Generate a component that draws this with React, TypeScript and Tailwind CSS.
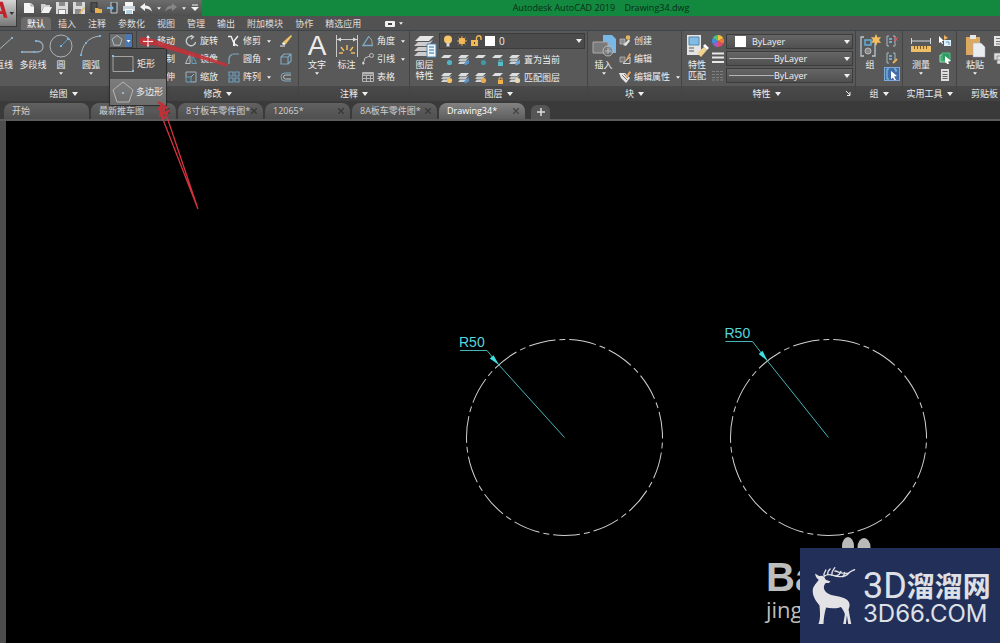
import type { ReactNode } from 'react'

const glyphs: Record<string, ReactNode> = {
  move: (
    <g stroke="#f4f4f4" fill="#f4f4f4">
      <path d="M2 6h8M6 2v8" />
      <path stroke="none" d="M6 0l2 3H4zM6 12l2-3H4zM0 6l3-2v4zM12 6L9 4v4z" />
    </g>
  ),
  rotate: (
    <g fill="none" stroke="#c4ccd0" strokeWidth="1.3">
      <path d="M7.5 1.6A4.7 4.7 0 1 0 10.6 7" />
      <path d="M5.5 0l3 1.8-2.6 2.4" />
    </g>
  ),
  trim: (
    <g fill="none" stroke="#f0f0f0" strokeWidth="1.4">
      <path d="M0 1.500h3M3 1l4 10M10 1L6 6" />
      <path d="M6 6v5" strokeWidth="2" />
      <path d="M7 9l3 2" />
    </g>
  ),
  erase: (
    <g>
      <path d="M11 0l1 1-6 8-3-2z" fill="#f2c667" />
      <path d="M3 7l3 2-2 1-2-1z" fill="#fff" />
      <path d="M0 11h5" stroke="#f2f2f2" />
    </g>
  ),
  copy: (
    <g fill="none" stroke="#c8c8c8">
      <circle cx="4" cy="5" r="3" />
      <circle cx="8" cy="7" r="3" stroke="#7fb2d0" />
    </g>
  ),
  mirror: (
    <g fill="none">
      <path d="M5 1v9.500H.5z" stroke="#b9c2c8" />
      <path d="M7 1v9.500h4.500z" stroke="#6d9db9" />
    </g>
  ),
  fillet: <path d="M1 11V6a5 5 0 0 1 5-5h5" fill="none" stroke="#7fa9c2" strokeWidth="1.2" />,
  solid: (
    <g fill="none" stroke="#7ea6bd" strokeWidth="1.2">
      <path d="M1 4h7v7H1zM1 4l3-3h7v7l-3 3M8 4l3-3" />
    </g>
  ),
  stretch: <path d="M1 2h6v8H1zM7 6h4M9 4l2 2-2 2" fill="none" stroke="#a9bcc7" />,
  scale: (
    <g fill="none">
      <path d="M1 6V1h10v10H6" stroke="#9fb4c0" />
      <path d="M1 6h5v5H1z" stroke="#6fa0bd" />
      <path d="M6 6l3-3" stroke="#9fb4c0" />
    </g>
  ),
  array: (
    <g fill="none" stroke="#6f9fbe" strokeWidth="1.2">
      <path d="M1 1h4v4H1zM7 1h4v4H7zM1 7h4v4H1zM7 7h4v4H7z" />
    </g>
  ),
  offset: (
    <g fill="none" stroke="#7ea6bd">
      <path d="M11 2H5a4 4 0 0 0 0 8h6" />
      <path d="M11 4H5.500a2 2 0 0 0 0 4H11" stroke="#b9c6cd" />
    </g>
  ),
  angle: (
    <g fill="none">
      <path d="M7 1L1 10.500h10" stroke="#7fa9c2" strokeWidth="1.3" />
      <path d="M7 2c3 2 3.500 5 3 8" stroke="#aaa" />
    </g>
  ),
  leader: (
    <g fill="none" stroke="#bdbdbd">
      <path d="M1 11l2-6 5-2" />
      <circle cx="9.500" cy="2.500" r="2" />
      <path d="M0 9l1 3 2-2z" fill="#ddd" stroke="none" />
    </g>
  ),
  table: (
    <g fill="none" stroke="#b4b4b4">
      <path d="M.5 1.500h11v9H.5zM.5 4.500h11M.5 7.500h11M4.500 4v6M8.500 4v6" />
      <path d="M1 2.500h10" strokeWidth="2" />
    </g>
  ),
  create: (
    <g>
      <path d="M1 4h5v5H1z" fill="#8d8d8d" stroke="#ccc" strokeWidth=".6" />
      <path d="M4 10l6-6 1 2-4 5z" fill="#e0e0e0" />
      <circle cx="9" cy="2.500" r="2.300" fill="#e6b65c" />
    </g>
  ),
  edit: (
    <g>
      <path d="M1 4h5v5H1z" fill="#777" stroke="#ccc" strokeWidth=".6" />
      <path d="M4 10.500h7V4z" fill="none" stroke="#d5d5d5" />
      <path d="M10.500 0l1.500 1.500L8 7 6.500 7.500z" fill="#eda35b" />
    </g>
  ),
  attribute: (
    <g>
      <path d="M0 2h6l5 5-4 5-5-5z" fill="#e3e3e3" />
      <path d="M3 4l5 5M5 3l4 4" stroke="#777" />
      <path d="M10.500 0l1.500 1.500L8 7 6.500 6z" fill="#eda35b" />
    </g>
  ),
  wheel: (
    <g>
      <path d="M6 6V0a6 6 0 0 1 5.200 3z" fill="#f2c33c" />
      <path d="M6 6l5.200-3a6 6 0 0 1 0 6z" fill="#ee7a35" />
      <path d="M6 6l5.200 3A6 6 0 0 1 6 12z" fill="#dd4a6a" />
      <path d="M6 6v6A6 6 0 0 1 .8 9z" fill="#a45bd0" />
      <path d="M6 6L.8 9a6 6 0 0 1 0-6z" fill="#3f8fe0" />
      <path d="M6 6L.8 3A6 6 0 0 1 6 0z" fill="#4fc07a" />
    </g>
  ),
  weights: <path d="M0 1.500h12M0 5.500h12M0 10h12" stroke="#e8e8e8" strokeWidth="2" />,
  linetypes: <path d="M0 2.500h12M0 5.500h12M0 8.500h12M0 11h12" stroke="#808080" strokeDasharray="3 1" />,
  ungroup: (
    <g fill="none">
      <path d="M3 1H1v10h2M7 1h2v10H7" stroke="#a9bac5" />
      <path d="M3 4h3M3 7h3" stroke="#6fa8cf" strokeWidth="2" />
      <path d="M8 2l4 4M12 2L8 6" stroke="#e0525b" />
    </g>
  ),
  groupEdit: (
    <g fill="none">
      <path d="M3 1H1v10h2M7 1h2v7" stroke="#a9bac5" />
      <path d="M3 4h3M3 7h3" stroke="#6fa8cf" strokeWidth="2" />
      <path d="M7 11l4-4" stroke="#efb05c" strokeWidth="2" />
    </g>
  ),
  groupPick: (
    <g>
      <path d="M3 1H1v10h2M8 1h2v3" fill="none" stroke="#8cd0e0" />
      <path d="M5 3l6 5-3 .5L10 12l-1.500.5L7 9.500 5 11z" fill="#fff" />
    </g>
  ),
  quickSelect: (
    <g>
      <path d="M5 5h7v6H5z" fill="#dff0fa" />
      <path d="M7 7h3v3" stroke="#5a9ac4" fill="none" />
      <path d="M5 0l4 3-4 2z" fill="#efb05c" />
      <path d="M0 1l5 5-2 0 1 3-1 0-1-2-2 1z" fill="#fff" />
    </g>
  ),
  selectAll: (
    <g>
      <path d="M1 3h7v7H1z" fill="#2f9d63" stroke="#a9dfbf" />
      <path d="M3 1h8v8H3z" fill="#2f9d63" stroke="#56bd83" />
      <path d="M6 4l6 5-3 .5 1 2.500H8L7 10l-1 1z" fill="#fff" />
    </g>
  ),
  calc: (
    <g>
      <path d="M2 0h8v12H2z" fill="#dedede" />
      <path d="M3.500 2.500h5M3.500 5.500h5M3.500 7.500h5M3.500 9.500h5" stroke="#666" />
    </g>
  ),
  cut: (
    <g>
      <path d="M1 1h10v10H1z" fill="#e5e5e5" />
      <path d="M3 3.500h8M3 6.500h8M3 9h8" stroke="#777" />
    </g>
  ),
  clipCopy: <path d="M1 1h7v7H1zM4 4h8v8H4z" fill="#e0e0e0" stroke="#777" strokeWidth=".7" />,
  bulb: (
    <g>
      <circle cx="6" cy="4.500" r="4" fill="#f6c76c" />
      <path d="M4.500 8h3v3.500h-3z" fill="#d8d8d8" />
    </g>
  ),
  sun: (
    <g>
      <circle cx="6" cy="6" r="3.300" fill="#f3b858" />
      <path d="M6 1v10M1 6h10M2.500 2.500l7 7M9.500 2.500l-7 7" stroke="#f3b858" strokeWidth=".8" />
    </g>
  ),
  unlock: (
    <g>
      <path d="M1 5h7v6H1z" fill="#f0b755" />
      <path d="M6.500 5V3a2 2 0 0 1 4.500 0v2" fill="none" stroke="#f0b755" strokeWidth="1.400" />
      <path d="M4.500 7v2" stroke="#5c4520" />
    </g>
  ),
}

function Glyph({ name }: { name: string }) {
  return (
    <svg viewBox="0 0 12 12" className="size-3 shrink-0" aria-hidden="true">
      {glyphs[name]}
    </svg>
  )
}

// Stack of sheets with a small coloured badge, shared by every layer tool
function LayerGlyph({ badge, single, shape }: { badge: string; single?: boolean; shape?: 'dot' | 'pen' | 'lock' }) {
  return (
    <svg viewBox="0 0 12 12" className="size-3 shrink-0" aria-hidden="true">
      <path d="M3 1h8L8 4H0z" fill="#dcdfe0" />
      {!single && (
        <>
          <path d="M2 4.500L0 7h8l3-4-2 1.500z" fill="#bfc5c7" />
          <path d="M2 7.500L0 10h8l3-4-2 1.500z" fill="#cfd4d6" />
        </>
      )}
      {shape === 'pen' ? (
        <path d="M6 9.500l5-4v4l-4 2z" fill={badge} />
      ) : shape === 'lock' ? (
        <g>
          <path d="M6 8h5v4H6z" fill={badge} />
          <path d="M7 8V6h3v2" fill="none" stroke={badge} />
        </g>
      ) : (
        <circle cx="8.500" cy="8.500" r="2.600" fill={badge} />
      )}
    </svg>
  )
}

function Caret({ small }: { small?: boolean }) {
  return (
    <svg viewBox="0 0 6 4" className={small ? 'h-[3px] w-1 shrink-0' : 'h-1 w-1.5 shrink-0'} aria-hidden="true">
      <path d="M0 0h6L3 4z" fill="#f0f0f0" />
    </svg>
  )
}

function Tool({ icon, label, menu }: { icon: string; label: string; menu?: boolean }) {
  return (
    <button className="flex h-4 items-center gap-[3px] whitespace-nowrap">
      <Glyph name={icon} />
      <span>{label}</span>
      {menu && (
        <span className="ml-[3px]">
          <Caret small />
        </span>
      )}
    </button>
  )
}

function BigTool({ lines, menu, width, children }: { lines: string[]; menu?: boolean; width: string; children: ReactNode }) {
  return (
    <button className={`flex shrink-0 flex-col items-center whitespace-nowrap ${width}`}>
      <span className="flex h-[26px] items-center justify-center">{children}</span>
      {lines.map((line) => (
        <span key={line} className="leading-[11px]">
          {line}
        </span>
      ))}
      {menu && (
        <span className="mt-0.5">
          <Caret small />
        </span>
      )}
    </button>
  )
}

function Panel({ title, width, launcher, children }: { title: string; width: string; launcher?: boolean; children: ReactNode }) {
  return (
    <section className={`flex flex-col border-r border-[#444] ${width}`}>
      <div className="flex h-[55px] pt-0.5">{children}</div>
      <button className="flex h-[15px] items-center justify-center gap-1 bg-linear-to-b from-[#4a4a4a] to-[#424242] whitespace-nowrap">
        {launcher && <span className="flex-1" />}
        <span>{title}</span>
        <Caret />
        {launcher && (
          <span className="flex flex-1 justify-end pr-1">
            <svg viewBox="0 0 5 5" className="size-[5px]" aria-hidden="true">
              <path d="M0 0l4 4M4 1v3.500H1" stroke="#eee" fill="none" />
            </svg>
          </span>
        )}
      </button>
    </section>
  )
}

function PropertySelect({ label, swatch }: { label: string; swatch?: boolean }) {
  return (
    <label className="flex h-[15px] items-center border border-[#3c3c3c] bg-linear-to-b from-[#666] to-[#505050] pr-0.5">
      {swatch ? <span className="mr-1.5 ml-2 size-[11px] bg-white" /> : <span className="ml-0.5 h-px w-[45px] bg-[#b5b5b5]" />}
      <select aria-label={label} className="min-w-0 flex-1 appearance-none bg-transparent text-[9px] leading-3 text-[#f2f2f2]">
        <option>ByLayer</option>
      </select>
      <Caret />
    </label>
  )
}

function QuickAccess() {
  return (
    <div className="flex w-[202px] shrink-0 items-center justify-between bg-linear-to-b from-[#6c6c6c] to-[#4f4f4f] pr-[3px] pl-[23px]">
      <button aria-label="新建">
        <svg viewBox="0 0 12 12" className="size-3">
          <path d="M1 1h7l3 3v7H1z" fill="#f5f5f5" />
          <path d="M8 1v3h3" stroke="#999" fill="none" />
        </svg>
      </button>
      <button aria-label="打开">
        <svg viewBox="0 0 12 12" className="size-3">
          <path d="M1 2h4l1 1h4v2H4l-3 5z" fill="#cfcfcf" />
          <path d="M4 5h8l-3 6H1z" fill="#f2f2f2" />
        </svg>
      </button>
      <button aria-label="保存">
        <svg viewBox="0 0 12 12" className="size-3">
          <path d="M0 0h12v12H0z" fill="#d9d9d9" />
          <path d="M3 0h6v4H3zM2 7h8v5H2z" fill="#8b8b8b" />
          <path d="M3 8h6v4H3z" fill="#f6f6f6" />
        </svg>
      </button>
      <button aria-label="另存为">
        <svg viewBox="0 0 12 12" className="size-3">
          <path d="M0 0h12v12H0z" fill="#d9d9d9" />
          <path d="M3 0h6v4H3zM2 7h6v5H2z" fill="#8b8b8b" />
          <path d="M11 5l1 1-5 6-1-1z" fill="#eeb557" />
        </svg>
      </button>
      <button aria-label="从移动设备打开">
        <svg viewBox="0 0 12 12" className="size-3">
          <path d="M1 0h6v10H1z" fill="#4d4d4d" stroke="#333" />
          <path d="M5 6h3l1 1h3v4H5z" fill="#e9b04f" />
        </svg>
      </button>
      <button aria-label="保存到移动设备">
        <svg viewBox="0 0 12 12" className="size-3">
          <path d="M4 0h6v11H4z" fill="#494949" stroke="#bcd0dc" />
          <path d="M0 5h4V3l3 3-3 3V7H0z" fill="#6fb3e0" />
        </svg>
      </button>
      <button aria-label="打印">
        <svg viewBox="0 0 12 12" className="size-3">
          <path d="M2 0h8v4H2z" fill="#f7f7f7" />
          <path d="M0 4h12v5H0z" fill="#c9d3d9" />
          <path d="M2 7h8v5H2z" fill="#fff" />
          <path d="M3 9h6M3 11h6" stroke="#68a5cc" />
        </svg>
      </button>
      <button aria-label="放弃">
        <svg viewBox="0 0 12 12" className="size-3">
          <path d="M0 5l5-4v2.500c4 0 6 2 7 6C10 7.500 8 6.500 5 6.500V9z" fill="#f3f3f3" />
        </svg>
      </button>
      <Caret small />
      <button aria-label="重做">
        <svg viewBox="0 0 12 12" className="size-3">
          <path d="M12 5L7 1v2.500c-4 0-6 2-7 6 2-2 4-3 7-3V9z" fill="#868686" />
        </svg>
      </button>
      <Caret small />
      <button aria-label="自定义快速访问工具栏">
        <svg viewBox="0 0 8 8" className="size-2">
          <path d="M1 1h6" stroke="#f2f2f2" />
          <path d="M0 3h8L4 7z" fill="#f2f2f2" />
        </svg>
      </button>
    </div>
  )
}

const menus = ['默认', '插入', '注释', '参数化', '视图', '管理', '输出', '附加模块', '协作', '精选应用']

function MenuBar() {
  return (
    <nav className="flex h-[15px] items-end border-b border-[#3f464b] bg-[#525252] pl-[21px]">
      {menus.map((menu, i) => (
        <button
          key={menu}
          className={
            i === 0
              ? 'mr-px h-[13px] rounded-t-sm bg-[#6b6b6b] px-1.5 leading-[13px] text-white'
              : 'h-[13px] px-1.5 leading-[13px] whitespace-nowrap text-[#dedede]'
          }
        >
          {menu}
        </button>
      ))}
      <button aria-label="功能区显示" className="ml-[18px] flex h-[13px] items-center gap-1">
        <svg viewBox="0 0 10 6" className="h-1.5 w-2.5">
          <rect width="10" height="6" rx="1" fill="#f0f0f0" />
          <path d="M3 2h4v2H3z" fill="#444" />
        </svg>
        <Caret small />
      </button>
    </nav>
  )
}

function ShapeMenu() {
  return (
    <div className="relative">
      <button aria-label="多边形" className="flex h-[15px] w-6 border border-[#3f3f3f] bg-[#6d6d6d]">
        <svg viewBox="0 0 22 13" className="h-[13px] w-[22px]">
          <path d="M7 1.500l5 3.700-2 6H4l-2-6z" fill="none" stroke="#a9bac2" />
          <path d="M15 0h7v13h-7z" fill="#4a78b5" />
          <path d="M16.500 6h4l-2 2.500z" fill="#fff" />
        </svg>
      </button>
      <ul className="absolute top-[15px] left-0 z-10 w-[58px] border border-[#2e2e2e] bg-[#4f4f4f] text-[#ececec] shadow">
        <li>
          <button className="flex h-[30px] w-full items-center gap-[3px] pl-0.5 whitespace-nowrap">
            <svg viewBox="0 0 22 18" className="h-[18px] w-[22px] shrink-0">
              <path d="M1 1.500h20v15H1z" fill="none" stroke="#a2a2a2" />
              <path d="M0 0h2v2H0zM20 15h2v2h-2z" fill="#8db9d6" />
            </svg>
            矩形
          </button>
        </li>
        <li>
          <button className="flex h-[26px] w-full items-center gap-0.5 bg-linear-to-b from-[#7c7c7c] to-[#6d6d6d] pl-0.5 whitespace-nowrap">
            <svg viewBox="0 0 22 22" className="size-[22px] shrink-0">
              <path d="M11 1l10 8-4 12H5L1 9z" fill="none" stroke="#b5b5b5" />
              <path d="M10 11h2v2h-2z" fill="#8db9d6" />
            </svg>
            多边形
          </button>
        </li>
      </ul>
    </div>
  )
}

function Ribbon() {
  return (
    <div className="flex bg-[#595959] text-[#efefef]">
      <Panel title="绘图" width="w-[137px] shrink-0 [&>button]:pr-[9px]">
        <BigTool lines={['直线']} width="-ml-[9px] w-[26px]">
          <svg viewBox="0 0 24 24" className="size-6">
            <path d="M2 20L20 4" stroke="#a9b4ba" />
            <path d="M19 3h2v2h-2z" fill="#83b4d8" />
          </svg>
        </BigTool>
        <BigTool lines={['多段线']} width="w-8">
          <svg viewBox="0 0 24 24" className="size-6">
            <path d="M1 18h15c8 0 8-11 0-11" fill="none" stroke="#9cabb4" strokeWidth="1.300" />
            <path d="M0 17h2v2H0zM12 17h2v2h-2zM14 6h2v2h-2z" fill="#75b3e2" />
          </svg>
        </BigTool>
        <BigTool lines={['圆']} menu width="w-6">
          <svg viewBox="0 0 24 24" className="size-6">
            <circle cx="12" cy="12" r="11" fill="none" stroke="#a9b4ba" />
            <path d="M12 12l7-7" stroke="#5d9bc9" />
            <path d="M11 11h2v2h-2zM18 4h2v2h-2z" fill="#75b3e2" />
          </svg>
        </BigTool>
        <BigTool lines={['圆弧']} menu width="w-9">
          <svg viewBox="0 0 24 24" className="size-6">
            <path d="M2 22C3 11 9 3 21 2" fill="none" stroke="#a9b4ba" />
            <path d="M1 20h2v2H1zM6 8h2v2H6zM20 1h2v2h-2z" fill="#75b3e2" />
          </svg>
        </BigTool>
        <ShapeMenu />
      </Panel>

      <Panel title="修改" width="w-[162px] shrink-0">
        <div className="grid grid-cols-[43px_43px_52px_12px] content-start gap-y-0.5 pl-[5px]">
          <Tool icon="move" label="移动" />
          <Tool icon="rotate" label="旋转" />
          <Tool icon="trim" label="修剪" menu />
          <button aria-label="删除">
            <Glyph name="erase" />
          </button>
          <Tool icon="copy" label="复制" />
          <Tool icon="mirror" label="镜像" />
          <Tool icon="fillet" label="圆角" menu />
          <button aria-label="分解">
            <Glyph name="solid" />
          </button>
          <Tool icon="stretch" label="拉伸" />
          <Tool icon="scale" label="缩放" />
          <Tool icon="array" label="阵列" menu />
          <button aria-label="偏移">
            <Glyph name="offset" />
          </button>
        </div>
      </Panel>

      <Panel title="注释" width="w-[111px] shrink-0">
        <BigTool lines={['文字']} menu width="ml-1 w-7">
          <span className="font-['Liberation_Sans',sans-serif] text-[28px] leading-6 text-[#ececec]">A</span>
        </BigTool>
        <BigTool lines={['标注']} width="w-[31px]">
          <svg viewBox="0 0 24 24" className="size-6">
            <path d="M1.500 1v22M22.500 1v22M2 5.500h20" stroke="#c9c9c9" fill="none" />
            <path d="M2 5.500l4-2v4zM22 5.500l-4-2v4z" fill="#ddd" />
            <path d="M12 11v5M6 13l3 4M18 13l-3 4M4 19h4M20 19h-4" stroke="#f0b85f" strokeWidth="1.500" />
          </svg>
        </BigTool>
        <div className="flex flex-col gap-0.5">
          <Tool icon="angle" label="角度" menu />
          <Tool icon="leader" label="引线" menu />
          <Tool icon="table" label="表格" />
        </div>
      </Panel>

      <Panel title="图层" width="w-[178px] shrink-0">
        <BigTool lines={['图层', '特性']} width="w-[29px]">
          <svg viewBox="0 0 24 24" className="size-6">
            <path d="M7 2h14l-5 5H2z" fill="#e6e6e6" />
            <path d="M5 8l-4 4h14l5-6-4 2zM5 13l-4 4h14l5-6-4 2zM5 18l-4 4h14l5-6-4 2z" fill="#cdcdcd" />
            <path d="M14 10h9v13h-9z" fill="#f5f5f5" stroke="#4c88b5" />
            <path d="M16 13h5M16 16h5M16 19h5" stroke="#5aa0d0" strokeWidth="1.500" />
          </svg>
        </BigTool>
        <div className="flex min-w-0 flex-1 flex-col gap-[3px] pr-0.5">
          <label className="flex h-4 items-center gap-0.5 border border-[#3c3c3c] bg-[#4b4b4b] px-0.5">
            <Glyph name="bulb" />
            <Glyph name="sun" />
            <Glyph name="unlock" />
            <span className="mr-0.5 ml-px size-[10px] bg-white" />
            <select aria-label="当前图层" className="min-w-0 flex-1 appearance-none bg-transparent text-[10px] leading-3">
              <option>0</option>
            </select>
            <Caret />
          </label>
          <div className="flex h-[15px] items-center gap-[5px] pl-0.5 whitespace-nowrap">
            <button aria-label="关"><LayerGlyph single badge="#4fb3c5" /></button>
            <button aria-label="隔离"><LayerGlyph badge="#5793c8" shape="pen" /></button>
            <button aria-label="冻结"><LayerGlyph single badge="#3f98a4" /></button>
            <button aria-label="锁定"><LayerGlyph single badge="#54bccb" shape="lock" /></button>
            <button className="flex items-center gap-[3px]">
              <LayerGlyph badge="#6aa8d8" shape="pen" />
              置为当前
            </button>
          </div>
          <div className="flex h-[15px] items-center gap-[5px] pl-0.5 whitespace-nowrap">
            <button aria-label="打开所有图层"><LayerGlyph badge="#f3c261" /></button>
            <button aria-label="取消隔离"><LayerGlyph badge="#5793c8" shape="pen" /></button>
            <button aria-label="解冻所有图层"><LayerGlyph badge="#e9a94c" /></button>
            <button aria-label="解锁"><LayerGlyph single badge="#f0b24e" shape="lock" /></button>
            <button className="flex items-center gap-[3px]">
              <LayerGlyph badge="#e8d9b0" />
              匹配图层
            </button>
          </div>
        </div>
      </Panel>

      <Panel title="块" width="w-[94px] shrink-0">
        <BigTool lines={['插入']} menu width="w-[31px]">
          <svg viewBox="0 0 24 24" className="size-6">
            <path d="M11 1h9l4 4v14H11z" fill="#79b7e6" />
            <path d="M1 8h15v11H1z" fill="#7a7a7a" stroke="#aaa" />
            <circle cx="16" cy="17" r="5" fill="#777" fillOpacity=".6" stroke="#b8b8b8" />
            <path d="M16 14v6M13 17h6" stroke="#b8b8b8" />
          </svg>
        </BigTool>
        <div className="flex flex-col gap-0.5">
          <Tool icon="create" label="创建" />
          <Tool icon="edit" label="编辑" />
          <Tool icon="attribute" label="编辑属性" menu />
        </div>
      </Panel>

      <Panel title="特性" width="w-[174px] shrink-0" launcher>
        <BigTool lines={['特性', '匹配']} width="w-[30px]">
          <svg viewBox="0 0 24 24" className="size-6">
            <path d="M2 1h14v20H2z" fill="#e4e4e4" />
            <path d="M4 3h10v8H4z" fill="#84bbe3" stroke="#4e87b0" />
            <path d="M4 14h5M4 17h5" stroke="#555" />
            <path d="M12 19l7-6 3 3-6 7z" fill="#f0d291" />
            <path d="M18 12l2-2 4 4-2 2z" fill="#fff" />
          </svg>
        </BigTool>
        <div className="flex flex-col gap-[5px] pt-0.5 pr-0.5">
          <Glyph name="wheel" />
          <Glyph name="weights" />
          <Glyph name="linetypes" />
        </div>
        <div className="flex min-w-0 flex-1 flex-col gap-0.5 pt-px pr-0.5">
          <PropertySelect label="对象颜色" swatch />
          <PropertySelect label="线宽" />
          <PropertySelect label="线型" />
        </div>
      </Panel>

      <Panel title="组" width="w-[47px] shrink-0">
        <BigTool lines={['组']} width="w-7">
          <svg viewBox="0 0 24 24" className="size-6">
            <path d="M6 3H3v19h3M14 22h3V9" fill="none" stroke="#b9c6cf" strokeWidth="1.300" />
            <path d="M7 6h6v5H7z" fill="none" stroke="#62b0dc" strokeWidth="1.500" />
            <circle cx="10" cy="17" r="3" fill="#888" stroke="#bbb" />
            <path d="M18 0l1.500 3.500L23 3l-2 3 2 3-3.500-.5L18 12l-1.500-3.500L13 9l2-3-2-3 3.500.5z" fill="#f2bd63" />
          </svg>
        </BigTool>
        <div className="flex flex-col items-center gap-px">
          <button aria-label="解除编组" className="p-0.5"><Glyph name="ungroup" /></button>
          <button aria-label="组编辑" className="p-0.5"><Glyph name="groupEdit" /></button>
          <button aria-label="启用组选择" className="border border-[#7ea9dc] bg-[#426da8] px-px"><Glyph name="groupPick" /></button>
        </div>
      </Panel>

      <Panel title="实用工具" width="w-[54px] shrink-0">
        <BigTool lines={['测量']} menu width="w-9">
          <svg viewBox="0 0 22 22" className="size-[22px]">
            <path d="M1.500 3v6M20.500 3v6M2 6h18" stroke="#d0d8dc" />
            <path d="M1 11h20v6H1z" fill="#edbd68" />
            <path d="M4.500 11v3M7.500 11v3M10.500 11v3M13.500 11v3M16.500 11v3" stroke="#7d5d24" />
          </svg>
        </BigTool>
        <div className="flex flex-col gap-[5px] pt-0.5">
          <button aria-label="快速选择"><Glyph name="quickSelect" /></button>
          <button aria-label="全部选择"><Glyph name="selectAll" /></button>
          <button aria-label="快速计算器"><Glyph name="calc" /></button>
        </div>
      </Panel>

      <section className="flex min-w-0 flex-1 flex-col overflow-hidden">
        <div className="flex h-[55px] pt-0.5">
          <BigTool lines={['粘贴']} menu width="w-9">
            <svg viewBox="0 0 22 24" className="h-6 w-[22px]">
              <path d="M2 3h14v18H2z" fill="#dba960" />
              <path d="M6 1h6v4H6z" fill="#e8e8e8" />
              <path d="M9 9h8l4 4v10H9z" fill="#e9edef" stroke="#aab" strokeWidth=".5" />
            </svg>
          </BigTool>
          <div className="flex flex-col gap-[5px] pt-0.5">
            <button aria-label="剪切"><Glyph name="cut" /></button>
            <button aria-label="复制剪裁"><Glyph name="clipCopy" /></button>
          </div>
        </div>
        <div className="flex h-[15px] items-center bg-linear-to-b from-[#4a4a4a] to-[#424242] pl-3.5 whitespace-nowrap">剪贴板</div>
      </section>
    </div>
  )
}

const files = ['开始', '最新推车图', '8寸板车零件图*', '12065*', '8A板车零件图*', 'Drawing34*']

function FileTabs() {
  return (
    <div className="flex h-5 items-end gap-0.5 border-b-2 border-[#5b5b5b] bg-[#3a3a3a] pl-1">
      {files.map((file, i) => {
        const active = i === files.length - 1
        return (
          <div
            key={file}
            className={
              active
                ? 'flex h-4 w-[86px] items-center justify-between rounded-t-lg bg-linear-to-b from-[#828282] to-[#606060] pr-1.5 pl-2 text-white'
                : 'flex h-4 w-[85px] items-center justify-between rounded-t-lg bg-linear-to-b from-[#606060] to-[#505050] pr-1.5 pl-2 text-[#d0d0d0]'
            }
          >
            <button className="whitespace-nowrap">{file}</button>
            {i > 0 && (
              <button aria-label={`关闭 ${file}`}>
                <svg viewBox="0 0 6 6" className="size-1.5">
                  <path d="M0 0l6 6M6 0L0 6" stroke={active ? '#444' : '#383838'} strokeWidth="1.300" />
                </svg>
              </button>
            )}
          </div>
        )
      })}
      <button aria-label="新图形" className="ml-1 flex h-[14px] w-[19px] items-center justify-center rounded-t-md bg-[#555]">
        <svg viewBox="0 0 8 8" className="size-2">
          <path d="M4 0v8M0 4h8" stroke="#ddd" strokeWidth="1.500" />
        </svg>
      </button>
    </div>
  )
}

interface RadiusCircleProps {
  x: number
  y: number
  tipX: number
  tipY: number
  labelX: number
  labelY: number
}

function RadiusCircle({ x, y, tipX, tipY, labelX, labelY }: RadiusCircleProps) {
  const angle = (Math.atan2(y - tipY, x - tipX) * 180) / Math.PI
  return (
    <g>
      <circle
        cx={x}
        cy={y}
        r="98"
        fill="none"
        stroke="#d0d0d0"
        pathLength="615"
        strokeDasharray="6 4 27 4"
        transform={`rotate(-93 ${x} ${y})`}
      />
      <path d={`M${labelX} ${labelY + 3.5}h27L${tipX} ${tipY}L${x} ${y}`} fill="none" stroke="#45b5b8" />
      <path d="M0 0l-11-2.500v5z" fill="#3fe0e4" transform={`translate(${tipX} ${tipY}) rotate(${angle})`} />
      <text x={labelX - 1} y={labelY} fill="#55d6da" fontSize="14" fontFamily="Liberation Sans, sans-serif">
        R50
      </text>
    </g>
  )
}

function Deer() {
  return (
    <svg viewBox="30 30 140 185" className="h-[62px] w-[47px] shrink-0" fill="#e3e3e5" aria-hidden="true">
      <path d="M45 55l12 8 10-1 6 5 4 7 14 5-5 5h-9c-8 8-8 20 3 29 16 12 40 8 58 19 12 8 12 20 7 30 2 13 5 28 8 44h-9l-4-26-3 26h-8l5-29c-3-10-7-16-12-22-17 6-32 5-44 2-4 13-7 28-8 49H55c7-16 5-36 3-56-8-10-20-25-20-42 0-16 12-23 18-34-6-4-10-10-11-19z" />
      <g fill="none" stroke="#e3e3e5" strokeWidth="4" strokeLinecap="round">
        <path d="M72 65c-2-8 1-14 5-20M73 63c12-10 22-2 38 1 18 3 28-2 35-10 5-6 10-6 17-10" />
        <path d="M83 58c-1-8 2-12 7-16M95 60c-2-10 3-14 9-22M108 63c8-2 12-8 14-14M104 48c12 2 24 10 40 6M128 65c4-4 5-10 5-13" />
      </g>
    </svg>
  )
}

function Canvas() {
  return (
    <main className="relative min-h-[522px] flex-1 overflow-hidden border-l-[6px] border-[#4d4d4d] bg-black">
      <svg className="block h-[522px] w-full" aria-label="Drawing34">
        <RadiusCircle x={558.5} y={316.5} tipX={493} tipY={244} labelX={454} labelY={226} />
        <RadiusCircle x={822.5} y={316.5} tipX={761.5} tipY={240} labelX={719.5} labelY={217} />
      </svg>
      <div className="absolute right-0 bottom-0 flex items-end">
        <div className="flex w-[34px] flex-col justify-end pb-5 text-[#bdbdbd]">
          <span className="font-['Liberation_Sans',sans-serif] text-[40px] leading-9 font-bold">Ba</span>
          <span className="font-['Open_Sans',sans-serif] text-[22px] leading-7">jing</span>
        </div>
        <div className="relative">
          <svg viewBox="0 0 30 12" className="absolute -top-[11px] left-[41px] h-3 w-[30px]" fill="#b9b9b9" aria-hidden="true">
            <ellipse cx="7" cy="9" rx="6" ry="9" />
            <ellipse cx="23" cy="10" rx="6.500" ry="9" />
          </svg>
          <a href="#" className="relative flex h-[95px] w-[200px] items-center gap-1.5 bg-[#223059] pl-2.5 text-[#dfe0e6]">
            <Deer />
            <span className="flex flex-col pt-1">
              <span className="flex items-center leading-8 whitespace-nowrap">
                <span className="font-['Roboto',sans-serif] text-[36px]">3D</span>
                <span className="text-[28px] font-bold">溜溜网</span>
              </span>
              <span className="font-['Inter',sans-serif] text-[24px] leading-6">3D66.COM</span>
            </span>
          </a>
        </div>
      </div>
    </main>
  )
}

// Hand-drawn red pointers laid over the ribbon and the canvas
function Markup() {
  return (
    <svg className="pointer-events-none absolute top-0 left-0 z-20 h-[220px] w-[240px]" aria-hidden="true">
      <path d="M139 38l5-1 9 2 75 25v3l-75-22-9 1-5-3z" fill="#c92f37" fillOpacity=".85" />
      <path d="M143 41.500h10M148 36.500v10" stroke="#f5e5e5" />
      <path d="M158 102l4 2-3 5 6-1-4 7 7-4-3 7-5-3 2-11 5 4" fill="none" stroke="#c42f36" strokeWidth="2" />
      <path d="M162 117l36 92M167 117l31 92" fill="none" stroke="#d5333c" strokeWidth="1.300" />
    </svg>
  )
}

export default function App() {
  return (
    <div className="relative flex min-h-screen flex-col overflow-hidden bg-black font-['Open_Sans','Noto_Sans_CJK_SC',sans-serif] text-[9px] leading-3">
      <header className="flex h-4 bg-[#12893f]">
        <QuickAccess />
        <h1 className="flex-1 text-center text-[9px] leading-4 whitespace-pre text-[#0c2b18]">Autodesk AutoCAD 2019    Drawing34.dwg</h1>
      </header>
      <button
        aria-label="应用程序菜单"
        className="absolute top-0 left-0 z-10 flex h-[27px] w-[17px] items-center border-r border-b border-[#3a3a3a] bg-linear-to-b from-[#d5d5d5] to-[#777]"
      >
        <svg viewBox="0 0 17 27" className="h-[27px] w-[17px]">
          <path d="M0 1h3l5 17H4L3 14H0v-3h2L0 5z" fill="#c4202c" />
          <path d="M10 12h5l-2.500 3z" fill="#333" />
        </svg>
      </button>
      <MenuBar />
      <Ribbon />
      <FileTabs />
      <Canvas />
      <Markup />
    </div>
  )
}
